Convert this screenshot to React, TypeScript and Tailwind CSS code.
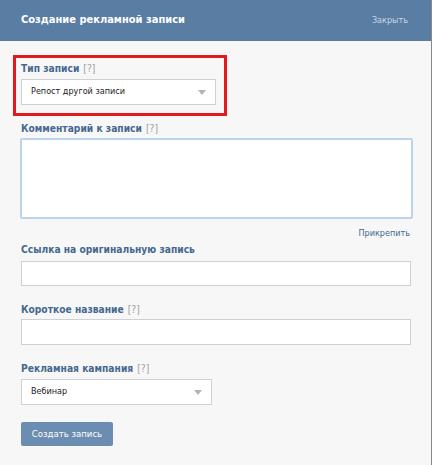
import React from 'react';

const font = { fontFamily: '"DejaVu Sans Condensed", "Liberation Sans", Arial, sans-serif' };

function Label({ text, help }: { text: string; help?: boolean }) {
  return (
    <div className="h-[14px] leading-[14px] text-[10.2px] font-bold text-[#45688e]">
      {text}
      {help && <span className="font-normal text-[#a0a0a0] ml-[4px]">[?]</span>}
    </div>
  );
}

function Select({ value, width }: { value: string; width: string }) {
  return (
    <div className={`${width} h-[26px] bg-white border border-[#cdd1d6] flex items-center justify-between pl-[9px] pr-[9px]`}>
      <span className="text-[9px] text-[#222]">{value}</span>
      <svg width="8" height="5" viewBox="0 0 8 5">
        <path d="M0 0 L8 0 L4 5 Z" fill="#b4b4b4" />
      </svg>
    </div>
  );
}

export default function App() {
  return (
    <div style={font} className="w-[434px] h-[465px] bg-white flex">
      <div className="w-[432px] h-full bg-[#f7f7f7] border-r border-[#8a8a8a]">
        <div className="h-[41px] bg-[#5a7da4] flex items-center justify-between pl-[21px] pr-[23px]">
          <span className="text-[11px] font-bold text-white">Создание рекламной записи</span>
          <span className="text-[9px] text-[#c9d7e7]">Закрыть</span>
        </div>
        <div className="pl-[21px] pt-[14px]">
          <div className="-ml-[8px] w-[214px] border-[3px] border-[#e3191c] pt-[4px] pl-[5px] pb-[8px]">
            <Label text="Тип записи" help />
            <div className="mt-[3px]">
              <Select value="Репост другой записи" width="w-[195px]" />
            </div>
          </div>

          <div className="mt-[6px]">
            <Label text="Комментарий к записи" help />
          </div>
          <div className="mt-[2px] -ml-[1px] w-[393px] h-[81px] bg-white border-2 border-[#bcd3ec] rounded-[2px]" />
          <div className="w-[389px] mt-[7px] h-[14px] leading-[14px] text-right text-[9px] text-[#45688e]">Прикрепить</div>

          <div className="mt-[3px]">
            <Label text="Ссылка на оригинальную запись" />
          </div>
          <div className="mt-[4px] w-[390px] h-[25px] bg-white border border-[#cdd1d6]" />

          <div className="mt-[17px]">
            <Label text="Короткое название" help />
          </div>
          <div className="mt-[2px] w-[390px] h-[26px] bg-white border border-[#cdd1d6]" />

          <div className="mt-[17px]">
            <Label text="Рекламная кампания" help />
          </div>
          <div className="mt-[3px]">
            <Select value="Вебинар" width="w-[191px]" />
          </div>

          <button className="mt-[17px] w-[92px] h-[24px] bg-[#6c8db2] rounded-[2px] text-[9.5px] text-white">
            Создать запись
          </button>
        </div>
      </div>
    </div>
  );
}
